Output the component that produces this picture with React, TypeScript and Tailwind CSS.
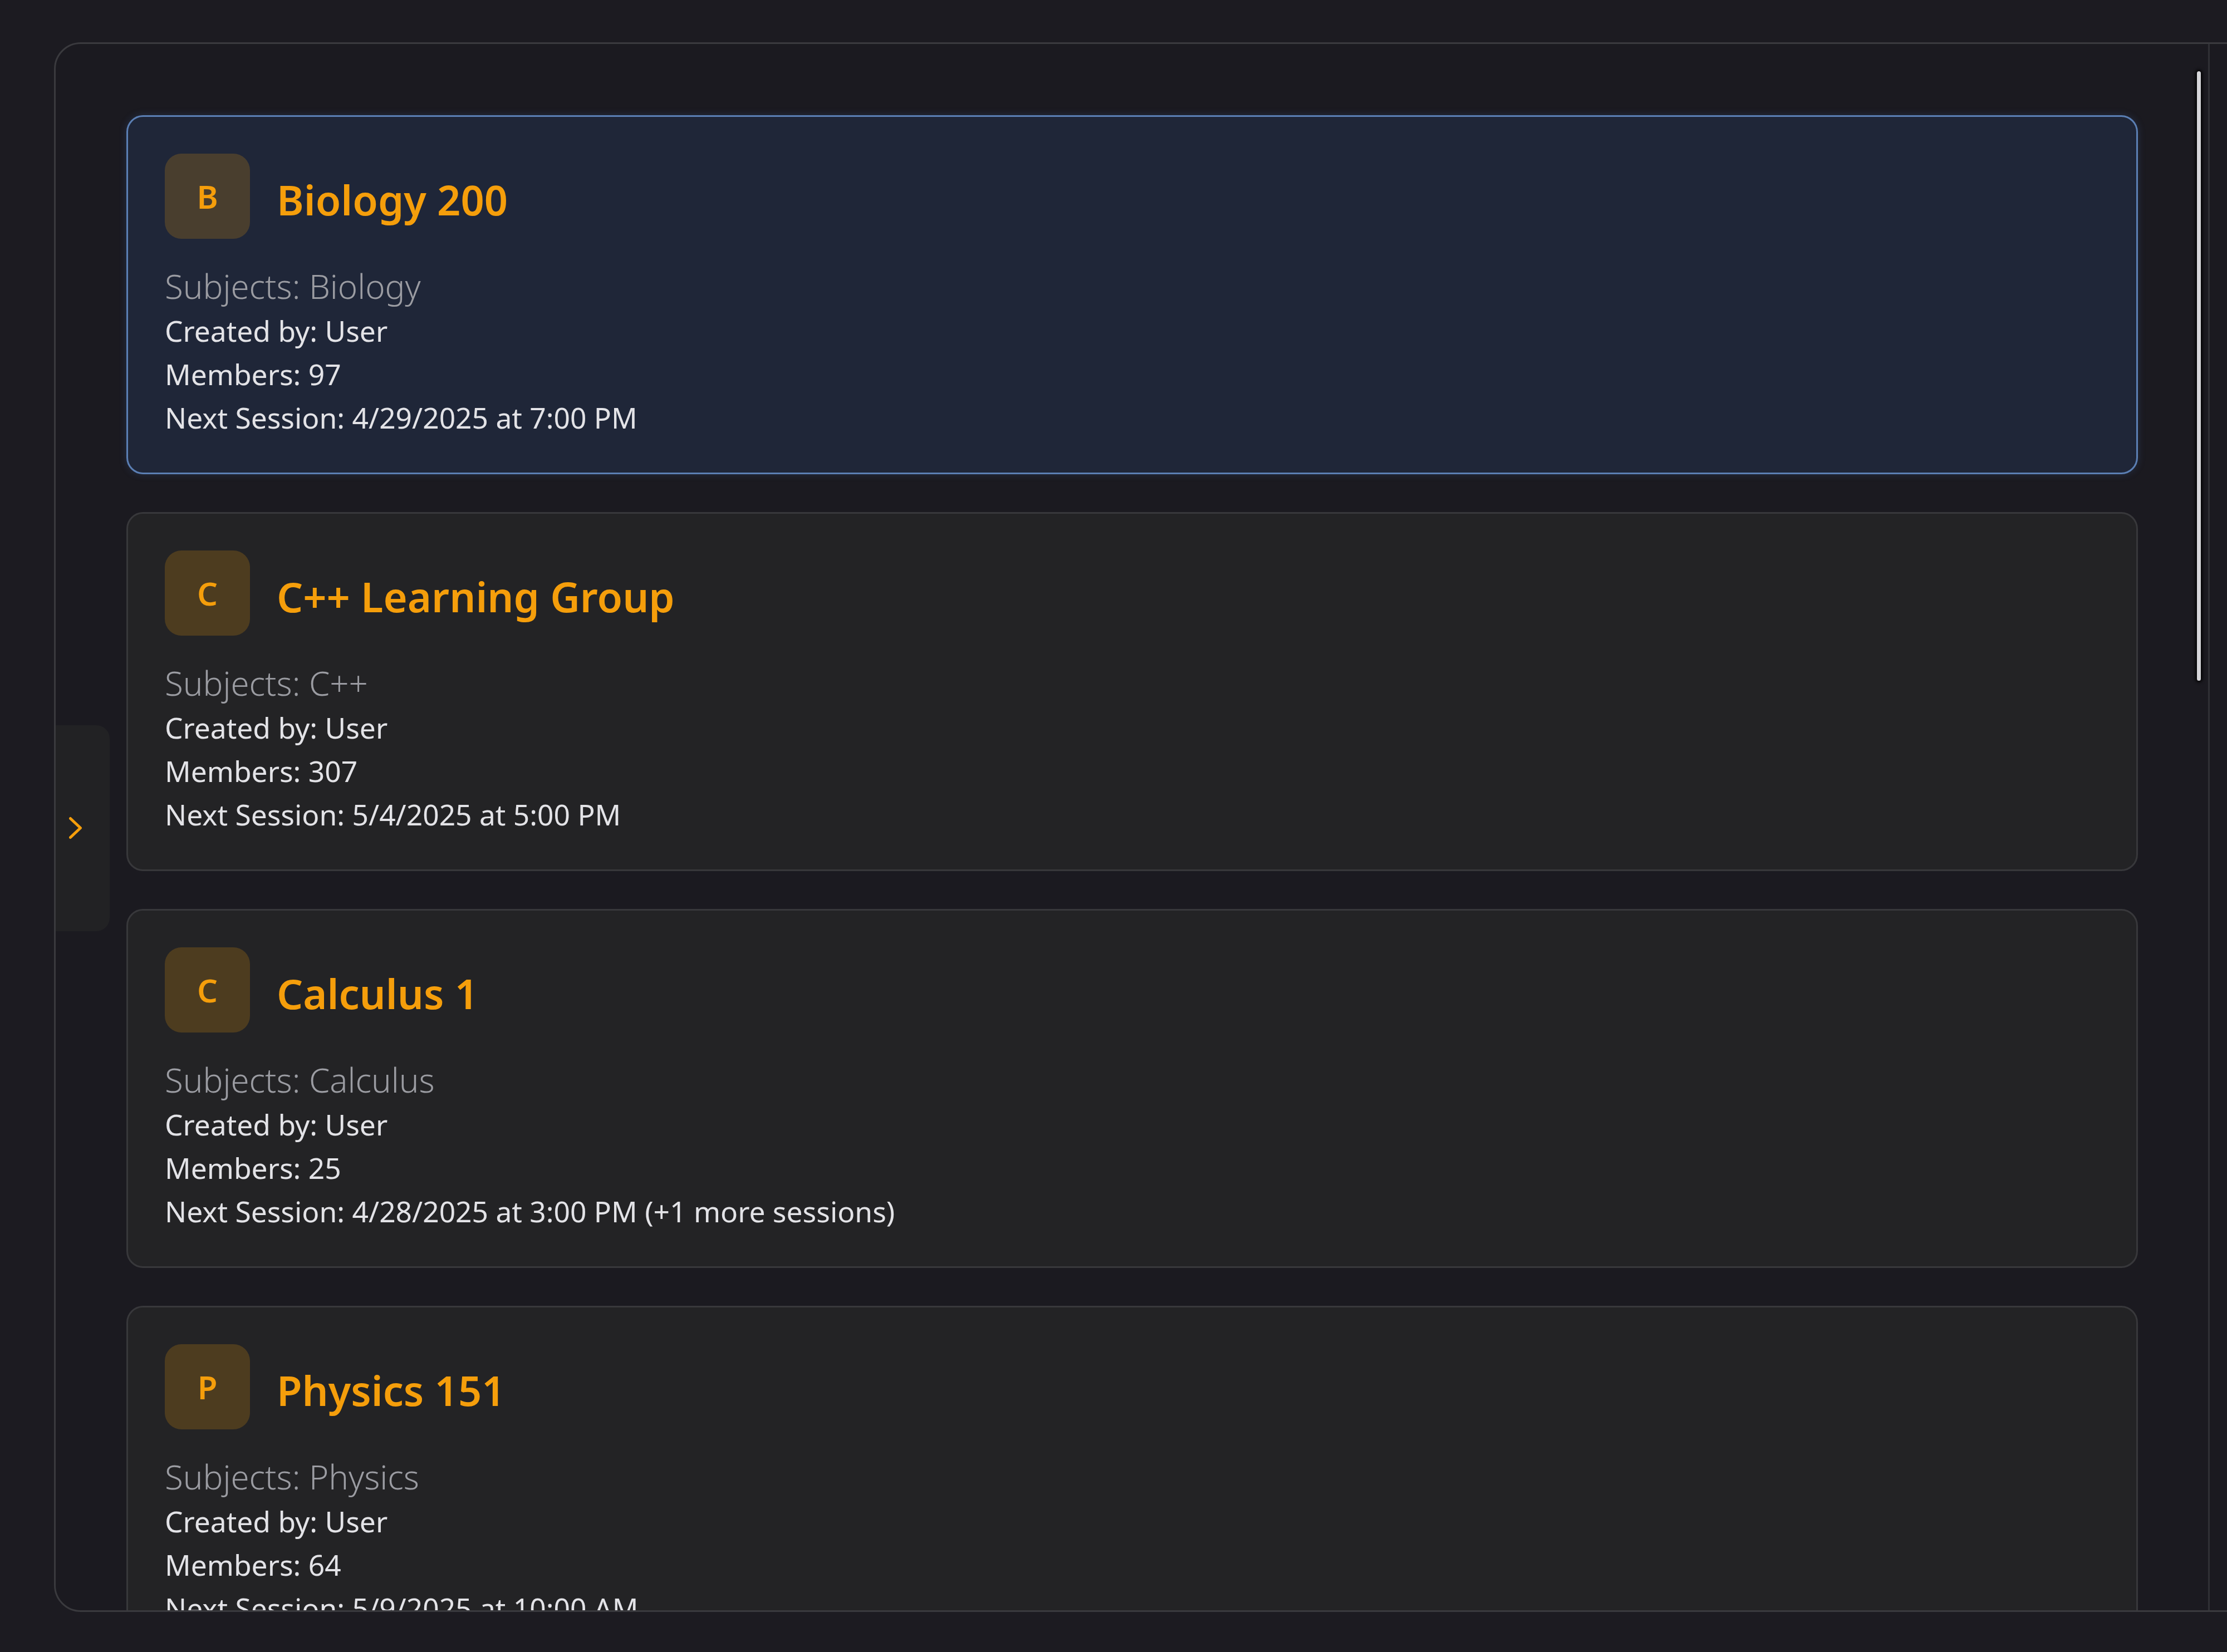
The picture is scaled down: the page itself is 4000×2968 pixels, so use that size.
import React from "react";

type Group = {
  letter: string;
  title: string;
  subjects: string;
  members: number;
  next: string;
  selected?: boolean;
};

const groups: Group[] = [
  { letter: "B", title: "Biology 200", subjects: "Biology", members: 97, next: "4/29/2025 at 7:00 PM", selected: true },
  { letter: "C", title: "C++ Learning Group", subjects: "C++", members: 307, next: "5/4/2025 at 5:00 PM" },
  { letter: "C", title: "Calculus 1", subjects: "Calculus", members: 25, next: "4/28/2025 at 3:00 PM (+1 more sessions)" },
  { letter: "P", title: "Physics 151", subjects: "Physics", members: 64, next: "5/9/2025 at 10:00 AM" },
];

function Card({ g }: { g: Group }) {
  return (
    <div
      className={
        g.selected
          ? "shrink-0 rounded-[30px] border-[3px] border-[#5b7fb4] bg-[#1f2638] pt-[66px] pl-[66px] pb-[60px] shadow-[0_0_14px_rgba(70,110,180,0.25)]"
          : "shrink-0 rounded-[30px] border-[3px] border-[#38383b] bg-[#232325] pt-[66px] pl-[66px] pb-[60px]"
      }
    >
      <div className="flex items-center gap-[48px]">
        <div className="flex h-[153px] w-[153px] items-center justify-center rounded-[30px] bg-[#f59e0b]/20">
          <span className="text-[58px] font-semibold leading-none text-[#f59e0b]">{g.letter}</span>
        </div>
        <div className="pt-[12px] text-[74px] font-semibold leading-none text-[#f59e0b]">{g.title}</div>
      </div>
      <div className="mt-[44px] flex flex-col">
        <div className="text-[60px] font-light leading-[82px] text-[#9b9ca2]">Subjects: {g.subjects}</div>
        <div className="text-[51.5px] leading-[78px] text-[#e3e3e7]">Created by: User</div>
        <div className="text-[51.5px] leading-[78px] text-[#e3e3e7]">Members: {g.members}</div>
        <div className="text-[51.5px] leading-[78px] text-[#e3e3e7]">Next Session: {g.next}</div>
      </div>
    </div>
  );
}

export default function App() {
  return (
    <div className="h-[2968px] w-[4000px] overflow-hidden bg-[#1c1b21] pl-[97px] pt-[76px] font-['Noto_Sans',sans-serif]">
      <div className="relative flex h-[2820px] w-[4100px] overflow-hidden rounded-l-[48px] border-[3px] border-[#3a3a3e] bg-[#1b1a20]">
        <div className="relative h-full w-[3869px] shrink-0 overflow-hidden border-r-[3px] border-[#303035] pl-[127px] pr-[126px] pt-[128px]">
          <div className="flex flex-col gap-[68px]">
            {groups.map((g, i) => (
              <Card key={i} g={g} />
            ))}
          </div>
          <div className="absolute right-[13px] top-[49px] h-[1095px] w-[7px] rounded-full bg-[#d6d6da] shadow-[0_0_5px_3px_rgba(0,0,0,0.85)]" />
        </div>
        <div className="flex-1" />
        <div className="absolute left-0 top-[1224px] flex h-[370px] w-[97px] items-center rounded-r-[24px] bg-[#222224] pl-[24px]">
          <svg width="26" height="44" viewBox="0 0 26 44" fill="none">
            <polyline
              points="2.5,4.5 20.5,21.5 2.5,38.5"
              stroke="#f59e0b"
              strokeWidth="5"
              strokeLinecap="round"
              strokeLinejoin="round"
            />
          </svg>
        </div>
      </div>
    </div>
  );
}
